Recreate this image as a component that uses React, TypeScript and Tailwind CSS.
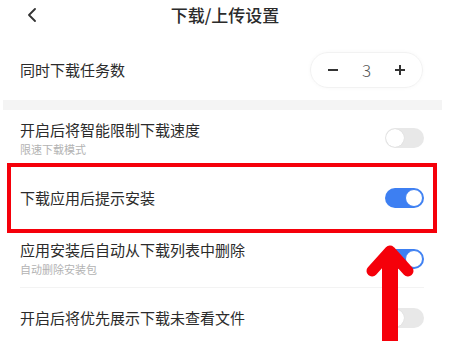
const font = {
  fontFamily: '"Noto Sans CJK SC", "Noto Sans", sans-serif',
};

function Toggle({ on }: { on: boolean }) {
  if (on) {
    return (
      <div className="flex h-[20px] w-[39px] items-center justify-end rounded-full bg-[#3d7ff2] pr-[1px]">
        <div className="h-[18px] w-[18px] rounded-full border border-[#3d7ff2] bg-white" />
      </div>
    );
  }
  return (
    <div className="flex h-[20px] w-[39px] items-center rounded-full bg-[#e8e8e8] pl-[1px]">
      <div className="h-[18px] w-[18px] rounded-full bg-white shadow-[0_0_1px_rgba(0,0,0,0.15)]" />
    </div>
  );
}

function SettingRow({
  title,
  sub,
  on,
  height,
}: {
  title: string;
  sub?: string;
  on: boolean;
  height: string;
}) {
  return (
    <div className={`flex items-center justify-between pl-[20px] pr-[26px] ${height}`}>
      <div className="flex flex-col gap-[1px]">
        <p className="text-[15px] leading-[20px] text-[#2b2b2b]">{title}</p>
        {sub && <p className="text-[11px] leading-[16px] text-[#b3b3b3]">{sub}</p>}
      </div>
      <Toggle on={on} />
    </div>
  );
}

export default function App() {
  return (
    <div className="relative h-[341px] w-[450px] overflow-hidden bg-white" style={font}>
      {/* header */}
      <div className="relative flex h-[30px] items-center justify-center">
        <svg
          className="absolute left-[27px] top-[8px]"
          width="10"
          height="14"
          viewBox="0 0 10 14"
          fill="none"
        >
          <path d="M8 1 L2 7 L8 13" stroke="#333" strokeWidth="1.8" strokeLinecap="round" strokeLinejoin="round" />
        </svg>
        <h1 className="text-[17px] font-medium leading-[22px] text-[#2b2b2b]">下载/上传设置</h1>
      </div>

      {/* concurrent downloads */}
      <div className="flex h-[70px] items-center justify-between pl-[20px] pr-[27px] pt-[10px]">
        <p className="text-[15px] leading-[20px] text-[#2b2b2b]">同时下载任务数</p>
        <div className="flex h-[36px] w-[113px] items-center justify-between rounded-full border border-[#f2f2f2] px-[17px] shadow-[0_0_4px_rgba(0,0,0,0.03)]">
          <span className="block h-[2px] w-[10px] bg-[#333]" />
          <span className="text-[17px] font-light leading-[20px] text-[#555]">3</span>
          <span className="relative block h-[10px] w-[10px]">
            <span className="absolute left-0 top-[4px] h-[2px] w-[10px] bg-[#333]" />
            <span className="absolute left-[4px] top-0 h-[10px] w-[2px] bg-[#333]" />
          </span>
        </div>
      </div>

      <div className="ml-[3px] mr-[8px] h-[10px] bg-[#f4f4f4]" />

      <SettingRow title="开启后将智能限制下载速度" sub="限速下载模式" on={false} height="h-[56px]" />
      <SettingRow title="下载应用后提示安装" on={true} height="h-[64px]" />
      <SettingRow title="应用安装后自动从下载列表中删除" sub="自动删除安装包" on={true} height="h-[57px]" />
      <div className="ml-[20px] mr-[26px] h-px bg-[#f3f3f3]" />
      <SettingRow title="开启后将优先展示下载未查看文件" on={false} height="h-[60px]" />

      {/* annotation: red box */}
      <div className="absolute left-[7px] top-[163px] h-[70px] w-[430px] border-4 border-[#f5000a]" />

      {/* annotation: red arrow */}
      <svg className="absolute left-0 top-0" width="450" height="341" viewBox="0 0 450 341">
        <line x1="390" y1="258" x2="390" y2="345" stroke="#f5000a" strokeWidth="16" />
        <polyline
          points="372,271 390,251 408,271"
          fill="none"
          stroke="#f5000a"
          strokeWidth="11"
          strokeLinecap="round"
          strokeLinejoin="round"
        />
        <polygon points="390,247 380,262 400,262" fill="#f5000a" />
      </svg>
    </div>
  );
}
